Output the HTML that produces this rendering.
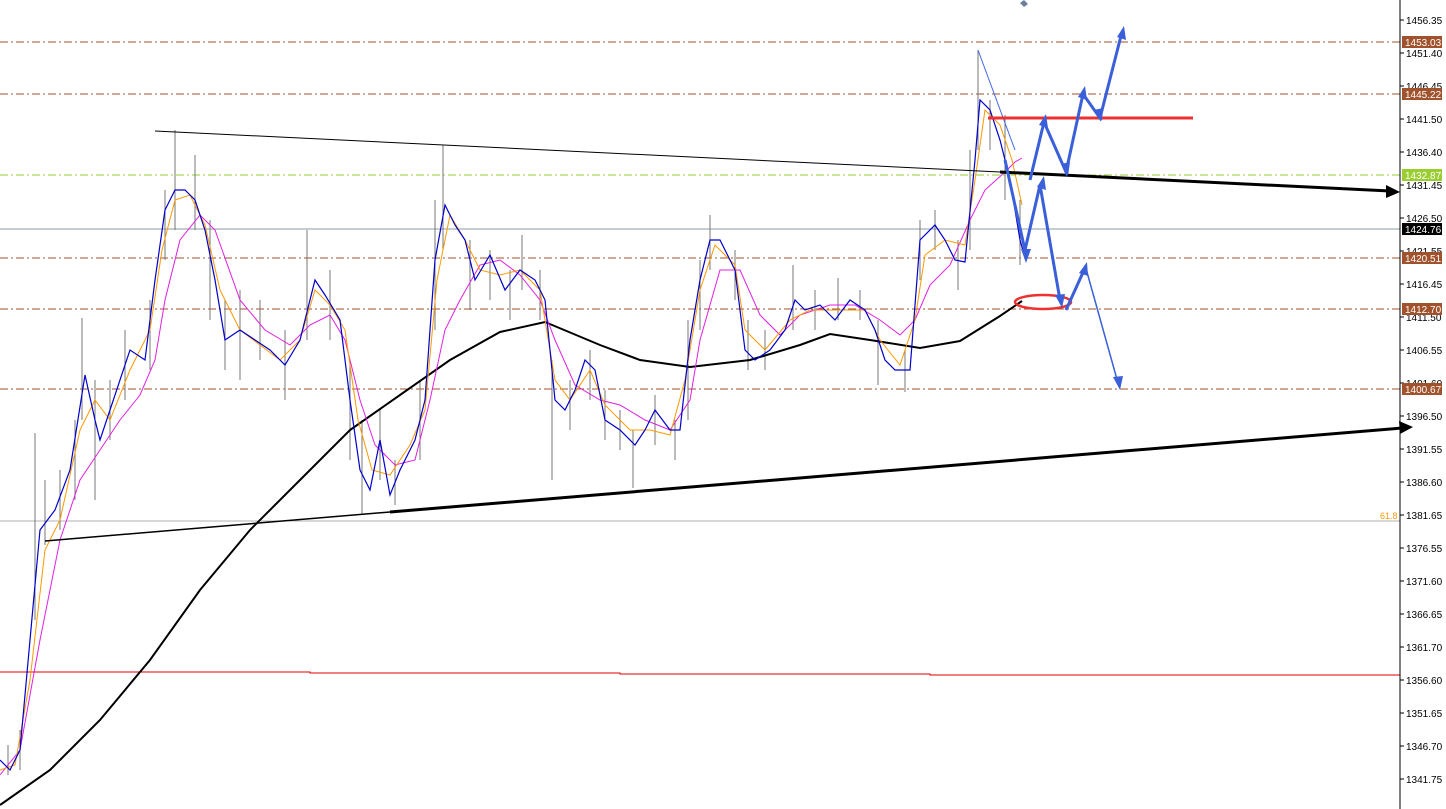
<!DOCTYPE html>
<html><head><meta charset="utf-8"><style>
html,body{margin:0;padding:0;background:#fff;}
svg{display:block;font-family:"Liberation Sans",sans-serif;}
</style></head><body>
<svg width="1446" height="809" viewBox="0 0 1446 809" xmlns="http://www.w3.org/2000/svg">
<rect width="1446" height="809" fill="#fff"/>
<!-- level lines -->
<g stroke-width="1" fill="none">
<line x1="0" y1="42" x2="1400" y2="42" stroke="#a0522d" stroke-dasharray="8,3,2,3"/>
<line x1="0" y1="94" x2="1400" y2="94" stroke="#a0522d" stroke-dasharray="8,3,2,3"/>
<line x1="0" y1="175" x2="1400" y2="175" stroke="#9acd32" stroke-dasharray="8,3,2,3"/>
<line x1="0" y1="229" x2="1400" y2="229" stroke="#8a9aa8"/>
<line x1="0" y1="258" x2="1400" y2="258" stroke="#a0522d" stroke-dasharray="8,3,2,3"/>
<line x1="0" y1="309" x2="1400" y2="309" stroke="#a0522d" stroke-dasharray="8,3,2,3"/>
<line x1="0" y1="389" x2="1400" y2="389" stroke="#a0522d" stroke-dasharray="8,3,2,3"/>
<line x1="0" y1="521" x2="1400" y2="521" stroke="#b0b0b0"/>
<polyline points="0,672 310,672 310,673 620,673 620,674 930,674 930,675 1400,675" stroke="#e00000"/>
</g>
<!-- gray bars (wicks) -->
<g stroke="#777" stroke-width="1">
<line x1="8" y1="745" x2="8" y2="775"/><line x1="20" y1="730" x2="20" y2="770"/><line x1="35" y1="433" x2="35" y2="620"/><line x1="45" y1="480" x2="45" y2="545"/><line x1="60" y1="470" x2="60" y2="530"/><line x1="75" y1="420" x2="75" y2="500"/><line x1="82" y1="318" x2="82" y2="420"/><line x1="95" y1="380" x2="95" y2="500"/><line x1="110" y1="380" x2="110" y2="440"/><line x1="125" y1="330" x2="125" y2="400"/><line x1="150" y1="300" x2="150" y2="370"/><line x1="165" y1="190" x2="165" y2="260"/><line x1="175" y1="130" x2="175" y2="230"/><line x1="195" y1="155" x2="195" y2="230"/><line x1="210" y1="220" x2="210" y2="320"/><line x1="225" y1="300" x2="225" y2="370"/><line x1="240" y1="290" x2="240" y2="380"/><line x1="260" y1="300" x2="260" y2="360"/><line x1="285" y1="330" x2="285" y2="400"/><line x1="307" y1="230" x2="307" y2="340"/><line x1="330" y1="270" x2="330" y2="340"/><line x1="350" y1="360" x2="350" y2="460"/><line x1="362" y1="420" x2="362" y2="515"/><line x1="380" y1="410" x2="380" y2="480"/><line x1="395" y1="460" x2="395" y2="505"/><line x1="420" y1="380" x2="420" y2="460"/><line x1="435" y1="200" x2="435" y2="330"/><line x1="443" y1="145" x2="443" y2="250"/><line x1="470" y1="240" x2="470" y2="310"/><line x1="490" y1="250" x2="490" y2="300"/><line x1="510" y1="270" x2="510" y2="320"/><line x1="522" y1="235" x2="522" y2="290"/><line x1="540" y1="270" x2="540" y2="320"/><line x1="552" y1="360" x2="552" y2="480"/><line x1="570" y1="380" x2="570" y2="430"/><line x1="590" y1="350" x2="590" y2="400"/><line x1="605" y1="390" x2="605" y2="440"/><line x1="620" y1="410" x2="620" y2="450"/><line x1="633" y1="430" x2="633" y2="488"/><line x1="655" y1="395" x2="655" y2="445"/><line x1="675" y1="420" x2="675" y2="460"/><line x1="688" y1="320" x2="688" y2="420"/><line x1="700" y1="260" x2="700" y2="330"/><line x1="710" y1="215" x2="710" y2="270"/><line x1="735" y1="250" x2="735" y2="300"/><line x1="748" y1="320" x2="748" y2="370"/><line x1="765" y1="330" x2="765" y2="370"/><line x1="793" y1="265" x2="793" y2="330"/><line x1="815" y1="290" x2="815" y2="330"/><line x1="838" y1="278" x2="838" y2="320"/><line x1="860" y1="290" x2="860" y2="320"/><line x1="878" y1="320" x2="878" y2="385"/><line x1="905" y1="350" x2="905" y2="392"/><line x1="920" y1="220" x2="920" y2="280"/><line x1="935" y1="210" x2="935" y2="250"/><line x1="958" y1="240" x2="958" y2="290"/><line x1="970" y1="150" x2="970" y2="250"/><line x1="978" y1="50" x2="978" y2="150"/><line x1="990" y1="100" x2="990" y2="150"/><line x1="1005" y1="115" x2="1005" y2="200"/><line x1="1020" y1="200" x2="1020" y2="265"/>
</g>
<!-- MA200 black -->
<polyline fill="none" stroke="#000" stroke-width="2" points="0,805 50,770 100,720 150,660 200,590 250,530 300,480 350,430 400,395 450,360 500,332 545,322 600,345 640,360 690,367 750,360 800,345 830,334 870,340 920,348 960,341 1000,316 1022,301"/>
<!-- magenta -->
<polyline fill="none" stroke="#e020e0" stroke-width="1" points="0,775 20,750 40,640 60,540 80,480 100,450 120,420 140,395 155,360 165,300 180,240 200,215 215,230 240,300 265,330 290,345 310,325 330,315 345,340 360,400 375,445 395,465 415,460 430,400 445,330 460,300 480,265 500,260 520,275 540,300 555,340 575,385 600,400 620,405 645,420 670,430 690,400 700,340 720,270 740,270 760,315 780,335 800,315 830,305 855,305 880,320 900,335 915,320 930,285 950,265 970,220 985,190 1005,172 1015,162 1022,158"/>
<!-- orange -->
<polyline fill="none" stroke="#ff9900" stroke-width="1" points="0,770 15,765 30,680 45,550 60,520 80,430 95,400 110,420 130,370 150,330 162,250 175,200 190,195 205,225 220,290 240,330 260,345 280,360 300,340 315,290 330,305 345,330 358,420 372,470 390,475 410,445 425,410 437,280 450,215 465,240 480,270 500,275 520,270 540,290 555,380 570,400 590,370 605,405 630,430 650,430 670,435 685,380 700,290 715,245 735,265 745,330 765,350 790,320 810,310 840,310 865,310 880,340 900,365 915,320 925,255 945,240 965,245 975,180 985,110 1000,125 1012,160 1022,205"/>
<!-- blue price -->
<polyline fill="none" stroke="#0000cc" stroke-width="1.2" points="0,760 10,770 20,750 30,640 40,530 55,510 70,470 85,375 95,420 100,440 110,410 120,380 130,350 145,360 155,280 165,210 175,190 185,190 195,200 205,230 215,280 225,340 240,330 255,340 270,350 285,365 300,340 315,280 325,295 340,320 350,400 360,470 370,490 380,440 390,495 400,470 415,440 425,400 435,260 445,205 455,225 465,240 475,280 490,255 505,290 520,270 535,280 545,300 555,400 565,410 575,390 585,360 595,370 605,420 620,430 635,445 645,430 655,410 670,430 680,430 690,340 700,280 710,240 720,240 735,270 745,350 755,360 770,350 785,330 795,300 805,310 820,305 835,320 850,300 865,310 875,330 885,360 895,370 910,370 920,240 935,225 945,240 955,260 965,262 975,160 980,100 990,110 1000,140 1010,180 1020,240 1025,258"/>
<!-- trendlines -->
<line x1="155" y1="131" x2="1000" y2="172" stroke="#000" stroke-width="1"/>
<line x1="1000" y1="172" x2="1390" y2="191" stroke="#000" stroke-width="3"/>
<polygon points="1400,192 1386,185 1386,198" fill="#000"/>
<line x1="45" y1="541" x2="390" y2="512" stroke="#000" stroke-width="1.5"/>
<line x1="390" y1="512" x2="1402" y2="428" stroke="#000" stroke-width="3"/>
<polygon points="1413,427 1399,421 1400,434" fill="#000"/>
<line x1="978" y1="50" x2="1015" y2="150" stroke="#4169e1" stroke-width="1"/>
<!-- red -->
<line x1="988" y1="118" x2="1193" y2="118" stroke="#ee3030" stroke-width="3"/>
<ellipse cx="1043" cy="302" rx="28" ry="7" fill="none" stroke="#ee3030" stroke-width="2.5"/>
<!-- blue arrows -->
<g stroke="#3a5fd9" stroke-width="3" fill="none">
<polyline points="1005,160 1026,255"/>
<polyline points="1030,180 1044,122 1066,172 1083,94 1100,118 1122,32"/>
<polyline points="1025,250 1040,185 1060,300"/>
<polyline points="1066,310 1085,268"/>
</g>
<line x1="1085" y1="265" x2="1118" y2="383" stroke="#3a5fd9" stroke-width="1.5"/>
<g fill="#3a5fd9">
<polygon points="1026,263 1021,249 1031,249"/>
<polygon points="1046,114 1048,128 1039,125"/>
<polygon points="1044,176 1046,190 1037,187"/>
<polygon points="1085,86 1087,100 1078,97"/>
<polygon points="1124,26 1126,40 1117,37"/>
<polygon points="1062,308 1055,295 1065,294"/>
<polygon points="1087,262 1088,276 1079,273"/>
<polygon points="1120,390 1113,377 1123,376"/>
<polygon points="1102,121 1094,110 1103,108"/>
<polygon points="1068,176 1061,164 1070,162"/>
<polygon points="1024,0 1028,4 1024,7 1020,3" fill="#6a7f99"/>
</g>
<!-- axis -->
<line x1="1400" y1="0" x2="1400" y2="809" stroke="#000" stroke-width="1"/>
<g font-size="10" fill="#000">
<g stroke="#000">
<line x1="1400" y1="20" x2="1404" y2="20"/><line x1="1400" y1="53" x2="1404" y2="53"/><line x1="1400" y1="86" x2="1404" y2="86"/><line x1="1400" y1="119" x2="1404" y2="119"/><line x1="1400" y1="152" x2="1404" y2="152"/><line x1="1400" y1="185" x2="1404" y2="185"/><line x1="1400" y1="218" x2="1404" y2="218"/><line x1="1400" y1="251" x2="1404" y2="251"/><line x1="1400" y1="284" x2="1404" y2="284"/><line x1="1400" y1="317" x2="1404" y2="317"/><line x1="1400" y1="350" x2="1404" y2="350"/><line x1="1400" y1="383" x2="1404" y2="383"/><line x1="1400" y1="416" x2="1404" y2="416"/><line x1="1400" y1="449" x2="1404" y2="449"/><line x1="1400" y1="482" x2="1404" y2="482"/><line x1="1400" y1="515" x2="1404" y2="515"/><line x1="1400" y1="548" x2="1404" y2="548"/><line x1="1400" y1="581" x2="1404" y2="581"/><line x1="1400" y1="614" x2="1404" y2="614"/><line x1="1400" y1="647" x2="1404" y2="647"/><line x1="1400" y1="680" x2="1404" y2="680"/><line x1="1400" y1="713" x2="1404" y2="713"/><line x1="1400" y1="746" x2="1404" y2="746"/><line x1="1400" y1="779" x2="1404" y2="779"/>
</g>
<text x="1406" y="24">1456.35</text><text x="1406" y="57">1451.40</text><text x="1406" y="90">1446.45</text><text x="1406" y="123">1441.50</text><text x="1406" y="156">1436.40</text><text x="1406" y="189">1431.45</text><text x="1406" y="222">1426.50</text><text x="1406" y="255">1421.55</text><text x="1406" y="288">1416.45</text><text x="1406" y="321">1411.50</text><text x="1406" y="354">1406.55</text><text x="1406" y="387">1401.60</text><text x="1406" y="420">1396.50</text><text x="1406" y="453">1391.55</text><text x="1406" y="486">1386.60</text><text x="1406" y="519">1381.65</text><text x="1406" y="552">1376.55</text><text x="1406" y="585">1371.60</text><text x="1406" y="618">1366.65</text><text x="1406" y="651">1361.70</text><text x="1406" y="684">1356.60</text><text x="1406" y="717">1351.65</text><text x="1406" y="750">1346.70</text><text x="1406" y="783">1341.75</text>
</g>
<g font-size="10" fill="#fff">
<rect x="1402" y="36" width="40" height="12" fill="#a0522d"/><text x="1405" y="46">1453.03</text>
<rect x="1402" y="88" width="40" height="12" fill="#a0522d"/><text x="1405" y="98">1445.22</text>
<rect x="1402" y="169" width="40" height="12" fill="#9acd32"/><text x="1405" y="179">1432.87</text>
<rect x="1402" y="223" width="40" height="12" fill="#000"/><text x="1405" y="233">1424.76</text>
<rect x="1402" y="252" width="40" height="12" fill="#a0522d"/><text x="1405" y="262">1420.51</text>
<rect x="1402" y="303" width="40" height="12" fill="#a0522d"/><text x="1405" y="313">1412.70</text>
<rect x="1402" y="383" width="40" height="12" fill="#a0522d"/><text x="1405" y="393">1400.67</text>
</g>
<text x="1380" y="519" font-size="9" fill="#ff9900">61.8</text>
</svg>
</body></html>
